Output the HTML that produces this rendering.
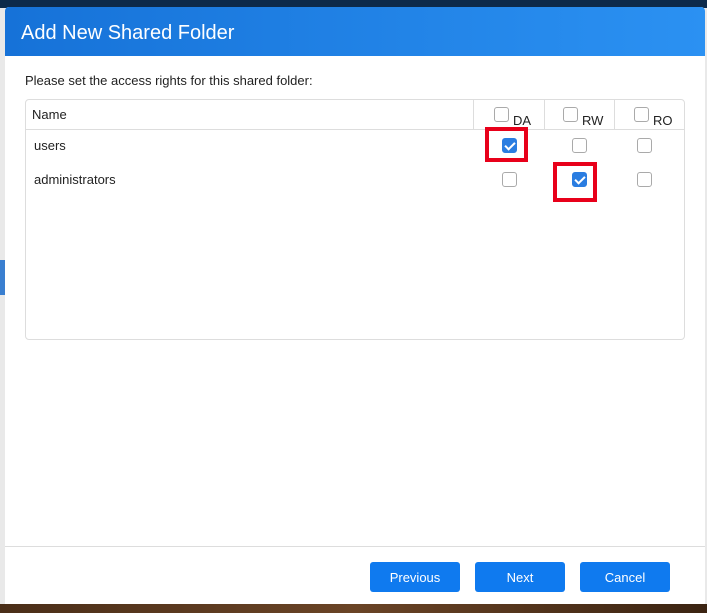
<!DOCTYPE html>
<html><head><style>
*{box-sizing:border-box;margin:0;padding:0}
body{width:707px;height:613px;overflow:hidden;position:relative;background:#e9e9e9;font-family:"Liberation Sans",sans-serif;}
.top{position:absolute;left:0;top:0;width:707px;height:8px;background:#0d2a4a}
.bot{position:absolute;left:0;top:604px;width:707px;height:9px;background:linear-gradient(90deg,#4a2e18,#6a4426,#3b2412)}
.lblue{position:absolute;left:0;top:260px;width:5px;height:35px;background:#3a7fd0}
.dlg{position:absolute;left:5px;top:7px;width:700px;height:597px;background:#fff;border-radius:4px 4px 0 0;overflow:hidden}
.hdr{height:49px;background:linear-gradient(90deg,#1672d8,#2b91f2);color:#fff;font-size:20px;padding:15px 0 0 16px}
.msg{position:absolute;left:20px;top:66px;font-size:13px;color:#222}
.tbl{position:absolute;left:20px;top:92px;width:660px;height:241px;border:1px solid #ddd;border-radius:4px}
.hrow{height:30px;border-bottom:1px solid #ddd;position:relative}
.txt{position:absolute;font-size:13px;color:#222}
.vl{position:absolute;top:0;height:30px;border-left:1px solid #ddd}
.cb{position:absolute;width:15px;height:15px;border:1px solid #aaa;border-radius:3px;background:#fff}
.cb.on{background:#2a7de1;border-color:#2a7de1}
.cb.on::after{content:"";position:absolute;left:4px;top:1px;width:4px;height:8px;border:solid #fff;border-width:0 2px 2px 0;transform:rotate(45deg)}
.red{position:absolute;border:4px solid #e8001a}
.foot{position:absolute;left:0;top:539px;width:700px;border-top:1px solid #ddd}
.btn{position:absolute;top:555px;width:90px;height:30px;background:#0f7aef;border-radius:3px;color:#fff;font-size:13px;text-align:center;line-height:31px}
</style></head><body>
<div class="top"></div><div class="lblue"></div><div class="bot"></div>
<div class="dlg">
<div class="hdr">Add New Shared Folder</div>
<div class="msg">Please set the access rights for this shared folder:</div>
<div class="tbl">
<div class="hrow">
<span class="txt" style="left:6px;top:7px">Name</span>
<div class="vl" style="left:447px"></div><div class="vl" style="left:518px"></div><div class="vl" style="left:588px"></div>
<div class="cb" style="left:468px;top:7px"></div><span class="txt" style="left:487px;top:13px">DA</span>
<div class="cb" style="left:537px;top:7px"></div><span class="txt" style="left:556px;top:13px">RW</span>
<div class="cb" style="left:608px;top:7px"></div><span class="txt" style="left:627px;top:13px">RO</span>
</div>
<span class="txt" style="left:8px;top:38px">users</span>
<span class="txt" style="left:8px;top:72px">administrators</span>
<div class="cb on" style="left:476px;top:38px"></div>
<div class="cb" style="left:546px;top:38px"></div>
<div class="cb" style="left:611px;top:38px"></div>
<div class="cb" style="left:476px;top:72px"></div>
<div class="cb on" style="left:546px;top:72px"></div>
<div class="cb" style="left:611px;top:72px"></div>
<div class="red" style="left:459px;top:27px;width:43px;height:35px"></div>
<div class="red" style="left:527px;top:62px;width:44px;height:40px"></div>
</div>
<div class="foot"></div>
<div class="btn" style="left:365px">Previous</div>
<div class="btn" style="left:470px">Next</div>
<div class="btn" style="left:575px">Cancel</div>
</div>
</body></html>
